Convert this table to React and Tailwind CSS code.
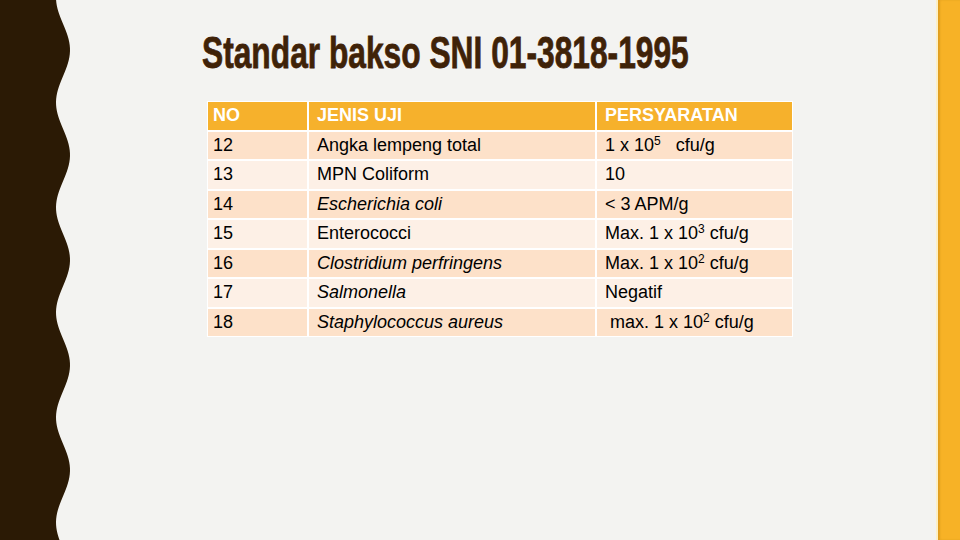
import React from "react";

const rows = [
  { no: "12", uji: "Angka lempeng total", italic: false, syarat: ["1 x 10", "5", "   cfu/g"] },
  { no: "13", uji: "MPN Coliform", italic: false, syarat: ["10"] },
  { no: "14", uji: "Escherichia coli", italic: true, syarat: ["< 3 APM/g"] },
  { no: "15", uji: "Enterococci", italic: false, syarat: ["Max. 1 x 10", "3", " cfu/g"] },
  { no: "16", uji: "Clostridium perfringens", italic: true, syarat: ["Max. 1 x 10", "2", " cfu/g"] },
  { no: "17", uji: "Salmonella", italic: true, syarat: ["Negatif"] },
  { no: "18", uji: "Staphylococcus aureus", italic: true, syarat: [" max. 1 x 10", "2", " cfu/g"] },
];

function wavePath() {
  let d = "M0 0";
  for (let y = 0; y <= 540; y += 3) {
    const x = 63 + 7 * Math.cos((2 * Math.PI * (y - 50)) / 105);
    d += ` L${x.toFixed(2)} ${y}`;
  }
  return d + " L0 540 Z";
}

function Syarat({ parts }) {
  return (
    <span className="whitespace-pre">
      {parts[0]}
      {parts[1] && <sup className="text-[12px] -top-[6px]">{parts[1]}</sup>}
      {parts[2]}
    </span>
  );
}

export default function App() {
  return (
    <div className="w-[960px] h-[540px] flex bg-[#f3f3f1] overflow-hidden">
      {/* wavy left band */}
      <svg width="72" height="540" viewBox="0 0 72 540" className="shrink-0">
        <path d={wavePath()} fill="#2b1a05" />
      </svg>

      <div className="flex-1 flex flex-col">
        <h1 className="mt-[25px] ml-[130px] h-[56px] text-[45px] leading-[56px] font-bold text-[#3f2208] whitespace-nowrap font-['Liberation_Sans',Arial,sans-serif]">
          <span className="inline-block origin-left scale-x-[0.705] [-webkit-text-stroke:0.8px_#3f2208]">Standar bakso SNI 01-3818-1995</span>
        </h1>

        <div className="mt-[20px] ml-[135px] w-[586px] p-[1px] bg-white grid grid-cols-[99px_286px_195px] gap-[2px] text-[18px] text-black font-['Liberation_Sans',Arial,sans-serif]">
          <div className="h-[27.5px] flex items-center pl-[5px] bg-[#f6b12c] text-white font-bold">NO</div>
          <div className="h-[27.5px] flex items-center pl-[8px] bg-[#f6b12c] text-white font-bold">JENIS UJI</div>
          <div className="h-[27.5px] flex items-center pl-[8px] bg-[#f6b12c] text-white font-bold">PERSYARATAN</div>
          {rows.map((r, i) => {
            const bg = i % 2 === 0 ? "bg-[#fde1c9]" : "bg-[#fdf0e6]";
            return (
              <React.Fragment key={r.no}>
                <div className={`h-[27.5px] flex items-center pl-[5px] ${bg}`}>{r.no}</div>
                <div className={`h-[27.5px] flex items-center pl-[8px] ${bg} ${r.italic ? "italic" : ""}`}>{r.uji}</div>
                <div className={`h-[27.5px] flex items-center pl-[8px] ${bg}`}>
                  <Syarat parts={r.syarat} />
                </div>
              </React.Fragment>
            );
          })}
        </div>
      </div>

      {/* right accent bar */}
      <div className="w-[24px] shrink-0 border-l-2 border-[#fcefc6] bg-[#f7b226] shadow-[inset_2px_0_2px_rgba(180,120,20,0.35)]" />
    </div>
  );
}
